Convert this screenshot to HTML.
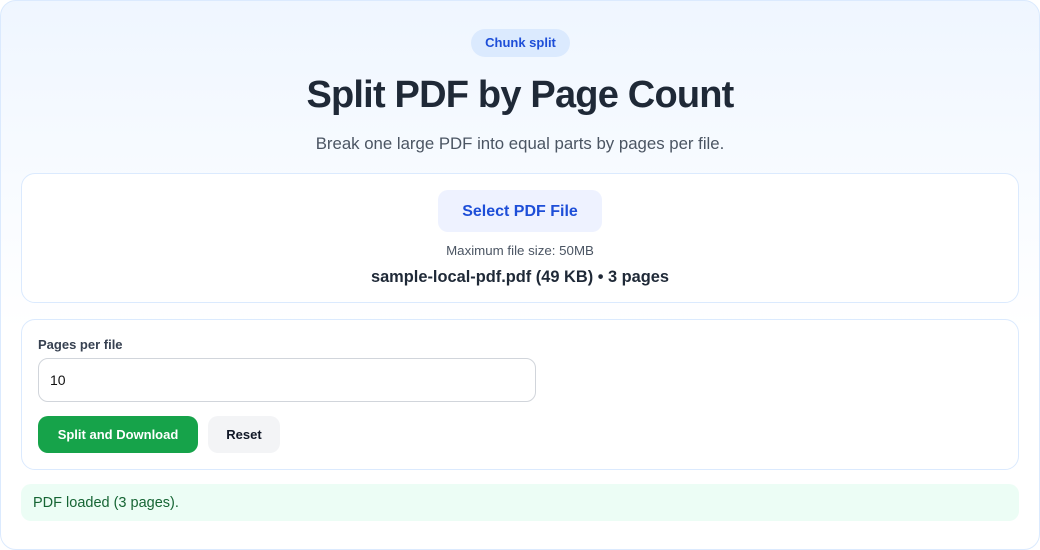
<!DOCTYPE html>
<html><head><style>
*{margin:0;padding:0;box-sizing:border-box}
body{width:1040px;height:550px;background:#fff;font-family:"Liberation Sans",sans-serif;position:relative;overflow:hidden}
.wrap{position:absolute;left:0;top:0;width:1040px;height:550px;border:1px solid #dbeafe;border-radius:16px;background:linear-gradient(#eff6ff,#ffffff 60%)}
.a{position:absolute}
.c{position:absolute;left:0;width:1040px;text-align:center}
.card{position:absolute;left:21px;width:998px;background:#fff;border:1px solid #dbeafe;border-radius:14px}
</style></head><body>
<div class="wrap"></div>
<div class="a" style="left:471px;top:29px;width:99px;height:28px;border-radius:14px;background:#dbeafe;color:#1d4ed8;font-weight:bold;font-size:13px;line-height:28px;text-align:center">Chunk split</div>
<div class="c" style="top:72px;font-size:38px;font-weight:bold;color:#1f2937;letter-spacing:-0.8px;line-height:46px">Split PDF by Page Count</div>
<div class="c" style="top:134px;font-size:16.8px;color:#4b5563;line-height:20px">Break one large PDF into equal parts by pages per file.</div>
<div class="card" style="top:173px;height:130px"></div>
<div class="a" style="left:438px;top:190px;width:164px;height:42px;border-radius:10px;background:#eef2ff;color:#1d4ed8;font-weight:bold;font-size:16px;line-height:44px;text-align:center">Select PDF File</div>
<div class="c" style="top:243px;font-size:13.3px;color:#4b5563;line-height:15px">Maximum file size: 50MB</div>
<div class="c" style="top:268px;font-size:16.4px;font-weight:bold;color:#1f2937;line-height:19px">sample-local-pdf.pdf (49 KB) • 3 pages</div>
<div class="card" style="top:319px;height:151px"></div>
<div class="a" style="left:38px;top:337px;font-size:13px;font-weight:bold;color:#374151">Pages per file</div>
<div class="a" style="left:38px;top:358px;width:498px;height:44px;border:1px solid #d1d5db;border-radius:10px;background:#fff;font-size:14px;color:#111;line-height:42px;padding-left:11px">10</div>
<div class="a" style="left:38px;top:416px;width:160px;height:37px;border-radius:10px;background:#16a34a;color:#fff;font-weight:bold;font-size:13px;line-height:37px;text-align:center">Split and Download</div>
<div class="a" style="left:208px;top:416px;width:72px;height:37px;border-radius:10px;background:#f3f4f6;color:#111827;font-weight:bold;font-size:13px;line-height:37px;text-align:center">Reset</div>
<div class="a" style="left:21px;top:484px;width:998px;height:37px;border-radius:10px;background:#ecfdf5;color:#166534;font-size:14.5px;line-height:38px;padding-left:12px">PDF loaded (3 pages).</div>
</body></html>
